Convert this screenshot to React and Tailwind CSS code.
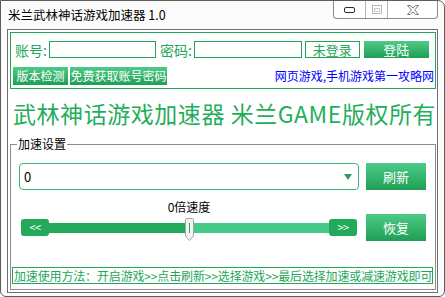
import React from "react";

const GREEN = "border-[#22a65a]";

function WinButtons() {
  return (
    <div className="ml-auto mr-[6px] h-[18px] flex border-x border-b border-[#8a8a8a] rounded-b-[4px] bg-white overflow-hidden">
      <div className="w-[31px] flex items-center justify-center">
        <svg width="11" height="6" viewBox="0 0 11 6">
          <rect x="0.5" y="0.5" width="10" height="5" rx="1.5" fill="#fff" stroke="#2b2b2b" />
        </svg>
      </div>
      <div className="w-[22px] border-l border-[#b5b5b5] flex items-center justify-center">
        <svg width="10" height="9" viewBox="0 0 10 9">
          <rect x="0.5" y="0.5" width="9" height="8" fill="#fff" stroke="#b8b8b8" />
          <rect x="2.5" y="3.5" width="5" height="3" fill="none" stroke="#c8c8c8" />
        </svg>
      </div>
      <div className="w-[50px] border-l border-[#b5b5b5] flex items-center justify-center">
        <svg width="12" height="10" viewBox="0 0 12 10">
          <path
            d="M0.5 0.5 H3.5 L6 3.2 L8.5 0.5 H11.5 L7.7 5 L11.5 9.5 H8.5 L6 6.8 L3.5 9.5 H0.5 L4.3 5 Z"
            fill="#fff"
            stroke="#7a7a7a"
            strokeLinejoin="round"
          />
        </svg>
      </div>
    </div>
  );
}

function GreenButton({ children, className = "" }) {
  return (
    <div
      className={`bg-linear-to-b from-[#4ccb88] to-[#1d9f55] text-white flex items-center justify-center ${className}`}
    >
      {children}
    </div>
  );
}

function Thumb() {
  return (
    <svg width="9" height="23" viewBox="0 0 9 23">
      <path
        d="M1.5 0.5 H7.5 Q8.5 0.5 8.5 1.5 V18 L4.5 22.5 L0.5 18 V1.5 Q0.5 0.5 1.5 0.5 Z"
        fill="#f3f3f3"
        stroke="#a5a5a5"
      />
      <line x1="4.5" y1="5" x2="4.5" y2="15" stroke="#23a95a" />
    </svg>
  );
}

export default function App() {
  return (
    <div className="w-[445px] h-[297px] bg-white font-['Noto_Sans_CJK_SC','Noto_Sans',sans-serif] overflow-hidden">
      <div className="w-[445px] h-[297px] border border-[#5c5c5c] rounded-tr-[7px] rounded-b-[6px] bg-[#fcfcfc] flex flex-col">
        {/* title bar */}
        <div className="h-[28px] flex items-start shrink-0">
          <div className="pl-[7px] h-full flex items-center text-[12.5px] text-black whitespace-nowrap">
            米兰武林神话游戏加速器 1.0
          </div>
          <WinButtons />
        </div>

        {/* client */}
        <div className="mx-[6px] h-[264px] border border-[#6f6f6f] bg-white">
          {/* login box */}
          <div className={`mt-[2px] ml-[2px] w-[426px] h-[57px] border ${GREEN}`}>
            <div className="mt-[8px] h-[17px] flex items-center pl-[4px] text-[14px] text-[#22a65a] leading-none">
              <span>账号:</span>
              <div className={`ml-[2px] w-[107px] h-[17px] border ${GREEN}`} />
              <span className="ml-[4px]">密码:</span>
              <div className={`ml-[2px] w-[108px] h-[17px] border ${GREEN}`} />
              <div className={`ml-[3px] w-[55px] h-[17px] border ${GREEN} flex items-center justify-center text-[13px]`}>
                未登录
              </div>
              <GreenButton className="ml-[4px] w-[65px] h-[17px] text-[13px]">登陆</GreenButton>
            </div>
            <div className="mt-[9px] h-[18px] flex items-center pl-[2px] pr-[1px] text-[12px] leading-none">
              <GreenButton className="w-[55px] h-[18px]">版本检测</GreenButton>
              <GreenButton className="ml-[2px] w-[97px] h-[18px]">免费获取账号密码</GreenButton>
              <span className="ml-auto text-[#0000ff] whitespace-nowrap">网页游戏,手机游戏第一攻略网</span>
            </div>
          </div>

          {/* big title */}
          <div className="mt-[12px] pl-[5px] h-[24px] leading-[24px] text-[23px] tracking-[0.55px] text-[#1fae5b] whitespace-nowrap">
            武林神话游戏加速器 米兰GAME版权所有
          </div>

          {/* group box */}
          <div className="mt-[19px] ml-[2px] w-[426px] h-[146px] border border-[#8c8c8c] relative">
            <span className="absolute -top-[8px] left-[6px] px-[1px] bg-white text-[12px] leading-[14px] text-black">
              加速设置
            </span>
            <div className="pt-[18px] pl-[8px]">
              <div className="flex">
                <div className="w-[340px] h-[27px] border border-[#3cb371] rounded-[4px] flex items-center pl-[4px] pr-[6px] text-[13px] text-black">
                  <span>0</span>
                  <svg className="ml-auto" width="8" height="6" viewBox="0 0 8 6">
                    <path d="M0 0 H8 L4 6 Z" fill="#2e9e5e" />
                  </svg>
                </div>
                <GreenButton className="ml-[7px] w-[60px] h-[27px] text-[13px]">刷新</GreenButton>
              </div>

              <div className="mt-[10px] flex items-start">
                <div className="w-[340px] flex flex-col">
                  <div className="h-[14px] leading-[14px] text-[12px] text-black text-center">0倍速度</div>
                  <div className="mt-[5px] pl-[2px] h-[17px] flex items-center">
                    <div className="w-[28px] h-[17px] rounded-[3px] bg-[#23a95a] text-white text-[11px] leading-none flex items-center justify-center tracking-[-0.5px]">
                      &lt;&lt;
                    </div>
                    <div className="w-[280px] h-[10px] flex relative">
                      <div className="w-[138px] h-full bg-[#23a95a]" />
                      <div className="flex-1 h-full bg-[#46ca88]" />
                      <div className="absolute left-[136px] -top-[5px]">
                        <Thumb />
                      </div>
                    </div>
                    <div className="w-[28px] h-[17px] rounded-[3px] bg-[#23a95a] text-white text-[11px] leading-none flex items-center justify-center tracking-[-0.5px]">
                      &gt;&gt;
                    </div>
                  </div>
                </div>
                <GreenButton className="ml-[7px] mt-[14px] w-[60px] h-[27px] text-[13px]">恢复</GreenButton>
              </div>
            </div>

            <div className={`mt-[26px] ml-[1px] w-[421px] h-[17px] border ${GREEN} flex items-center pl-[1px] text-[12px] tracking-[-0.15px] leading-none text-[#22a65a] whitespace-nowrap`}>
              加速使用方法：开启游戏&gt;&gt;点击刷新&gt;&gt;选择游戏&gt;&gt;最后选择加速或减速游戏即可
            </div>
          </div>
        </div>
      </div>
    </div>
  );
}
